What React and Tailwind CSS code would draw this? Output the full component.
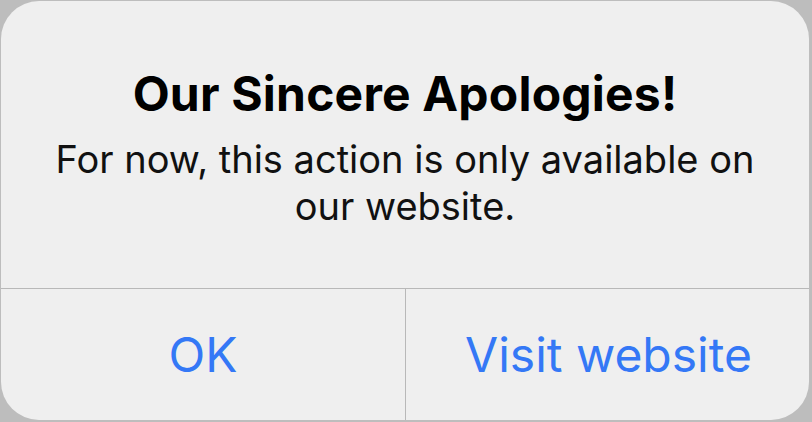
export default function App() {
  return (
    <div className="w-[812px] h-[422px] bg-[#bdbdbd] pt-[1px] pl-[1px] pr-[3px] pb-[2px]" style={{ fontFamily: "Inter, 'Noto Sans', sans-serif" }}>
      <div className="w-full h-full bg-[#efefef] rounded-[38px] flex flex-col overflow-hidden">
        <div className="h-[288px] flex flex-col items-center pt-[65px] border-b border-[#b8b8b8]">
          <div className="text-[48px] font-bold text-black leading-[56px] tracking-[0.2px]">Our Sincere Apologies!</div>
          <div className="mt-[14px] text-[38px] text-[#111] leading-[47px] text-center w-[740px]">
            For now, this action is only available on our website.
          </div>
        </div>
        <div className="flex-1 flex">
          <div className="w-[405px] border-r border-[#b8b8b8] flex items-center justify-center text-[48px] text-[#3478f6]">OK</div>
          <div className="flex-1 flex items-center justify-center text-[48px] text-[#3478f6] pl-[2px]">Visit website</div>
        </div>
      </div>
    </div>
  );
}
